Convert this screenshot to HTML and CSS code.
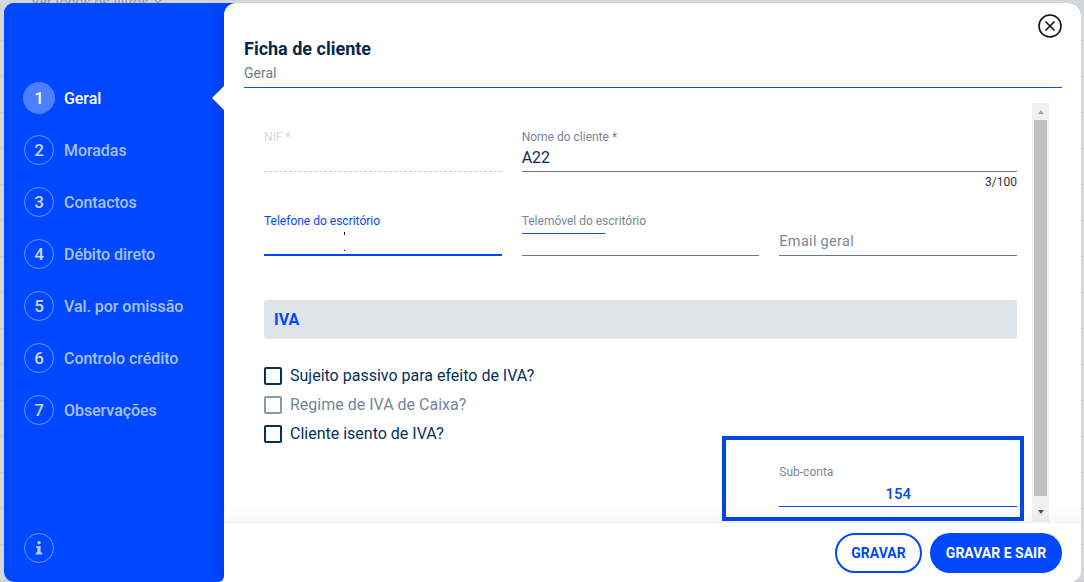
FILE: index.html
```html
<!DOCTYPE html>
<html lang="pt">
<head>
  <meta charset="UTF-8">
  <meta name="viewport" content="width=device-width, initial-scale=1.0">
  <title>Ficha de cliente</title>
  <link rel="stylesheet" href="styles.css">
</head>
<body>

  <!-- Page behind the dialog -->
  <div class="behind">
    Ver todos os filtros
    <svg width="12" height="12" viewBox="0 0 12 12"><path d="M1 3l5 5 5-5" fill="none" stroke="#8b97a8" stroke-width="1.2"/></svg>
  </div>

  <div class="modal">
    <aside class="sidebar">
      <ul class="steps">
        <li class="step active"><span class="num">1</span>Geral</li>
        <li class="step"><span class="num">2</span>Moradas</li>
        <li class="step"><span class="num">3</span>Contactos</li>
        <li class="step"><span class="num">4</span>Débito direto</li>
        <li class="step"><span class="num">5</span>Val. por omissão</li>
        <li class="step"><span class="num">6</span>Controlo crédito</li>
        <li class="step"><span class="num">7</span>Observações</li>
      </ul>
      <span class="num info">
        <svg width="14" height="20" viewBox="0 0 14 20"><circle cx="7" cy="3.5" r="2.2" fill="#b9ccff"/><path d="M3.5 7.5h5.5v8h2v2.5h-8v-2.5h2v-5.5h-1.500z" fill="#b9ccff"/></svg>
      </span>
    </aside>

    <main class="panel">
      <header class="panel-head">
        <h2>Ficha de cliente</h2>
        <p>Geral</p>
        <button class="close" aria-label="Fechar">
          <svg width="24" height="24" viewBox="0 0 24 24"><circle cx="12" cy="12" r="11" fill="none" stroke="#111" stroke-width="1.6"/><path d="M7.500 7.500l9 9M16.500 7.500l-9 9" stroke="#111" stroke-width="1.6"/></svg>
        </button>
      </header>

      <div class="content">
        <form class="form">
          <div class="grid row-one">
            <div class="field disabled">
              <label>NIF *</label>
              <div class="value"></div>
            </div>
            <div class="field wide">
              <label>Nome do cliente *</label>
              <div class="value">A22</div>
              <small class="counter">3/100</small>
            </div>
          </div>

          <div class="grid row-two">
            <div class="field focused">
              <label>Telefone do escritório</label>
              <div class="value"></div>
              <i class="tick tick-top"></i>
              <i class="tick tick-bottom"></i>
            </div>
            <div class="field">
              <label>Telemóvel do escritório</label>
              <div class="value"></div>
              <i class="notch"></i>
            </div>
            <div class="field">
              <div class="value placeholder">Email geral</div>
            </div>
          </div>

          <h3 class="band">IVA</h3>

          <ul class="checks">
            <li class="check"><span class="box"></span>Sujeito passivo para efeito de IVA?</li>
            <li class="check off"><span class="box"></span>Regime de IVA de Caixa?</li>
            <li class="check"><span class="box"></span>Cliente isento de IVA?</li>
          </ul>

          <div class="grid row-sub">
            <div class="field sub">
              <label>Sub-conta</label>
              <div class="value">154</div>
            </div>
          </div>
        </form>

        <div class="highlight"></div>

        <div class="scrollbar">
          <span class="arrow up"></span>
          <span class="thumb"></span>
          <span class="arrow down"></span>
        </div>
      </div>

      <footer class="panel-foot">
        <button class="btn outline">GRAVAR</button>
        <button class="btn solid">GRAVAR E SAIR</button>
      </footer>
    </main>
  </div>

</body>
</html>
```

FILE: styles.css
```css
* {
  box-sizing: border-box;
}
html, body {
  height: 100%;
}
body {
  margin: 0;
  padding: 3px 3px 0 4px;
  background: repeating-linear-gradient(to bottom, #d5d6da 0, #d5d6da 35px, #cbccd1 35px, #cbccd1 36px) 0 5px;
  font-family: Roboto, Arial, sans-serif;
  color: #06305a;
  overflow: hidden;
  position: relative;
}
.behind {
  position: absolute;
  top: -6px;
  left: 31px;
  font-size: 14px;
  color: #8b97a8;
}
.modal {
  position: relative;
  display: flex;
  height: 579px;
  border-radius: 10px 12px 12px 10px;
  overflow: hidden;
  background: linear-gradient(to bottom, #0048ff 50%, #fff 50%);
}

/* Left steps */
.sidebar {
  width: 220px;
  flex: none;
  display: flex;
  flex-direction: column;
  justify-content: space-between;
  padding: 79px 0 19px 19px;
  background: #0048ff;
  border-radius: 0 0 6px 0;
}
.steps {
  list-style: none;
  margin: 0;
  padding: 0;
}
.step {
  position: relative;
  display: flex;
  align-items: center;
  gap: 9px;
  height: 32px;
  margin-bottom: 20px;
  font-size: 16px;
  font-weight: 500;
  letter-spacing: -0.05px;
  color: #a9c0ff;
}
.num {
  width: 30px;
  height: 30px;
  margin: 0 1px;
  display: flex;
  align-items: center;
  justify-content: center;
  border: 1px solid #6e94ff;
  border-radius: 50%;
  font-size: 17px;
  font-weight: 500;
  color: #c9d8ff;
}
.step.active {
  color: #fff;
}
.step.active .num {
  width: 32px;
  height: 32px;
  margin: 0;
  border: none;
  background: #4d7eff;
  color: #fff;
}
.step.active::after {
  content: "";
  position: absolute;
  right: 0;
  top: 4px;
  border-style: solid;
  border-width: 12px 12px 12px 0;
  border-color: transparent #fff transparent transparent;
}
.info svg {
  transform: scale(0.8);
}

/* Right panel */
.panel {
  flex: 1;
  min-width: 0;
  display: flex;
  flex-direction: column;
  background: #fff;
  border-radius: 12px 0 0 0;
  box-shadow: 0 0 24px rgba(0, 20, 110, 0.25);
}
.panel-head {
  position: relative;
  height: 85px;
  margin: 0 19px 0 20px;
  padding-top: 36px;
  border-bottom: 1px solid #1a4fd0;
}
.panel-head h2 {
  margin: 0;
  font-size: 18px;
  font-weight: 700;
  line-height: 20px;
  color: #06284a;
}
.panel-head p {
  margin: 6px 0 0;
  font-size: 14px;
  line-height: 16px;
  color: #6d7a89;
}
.close {
  position: absolute;
  top: 11px;
  right: 0;
  padding: 0;
  border: none;
  background: none;
  line-height: 0;
}
.content {
  position: relative;
  flex: 1;
  min-height: 0;
  overflow: hidden;
}
.form {
  padding: 42px 64px 0 40px;
}
.grid {
  display: grid;
  grid-template-columns: repeat(3, 1fr);
  column-gap: 20px;
}

/* Fields */
.field {
  position: relative;
}
.field label {
  display: block;
  font-size: 12px;
  line-height: 14px;
  color: #7a8796;
}
.value {
  height: 28px;
  padding-top: 4px;
  font-size: 16px;
  line-height: 20px;
  border-bottom: 1px solid #6e7885;
}
.wide {
  grid-column: span 2;
}
.counter {
  display: block;
  margin-top: 4px;
  text-align: right;
  font-size: 12px;
  line-height: 13px;
  color: #333;
}
.disabled label {
  color: #d3d8df;
}
.disabled .value {
  border-bottom: 1px dashed #c9ced5;
}
.row-two {
  margin-top: 25px;
}
.focused label {
  color: #0048ff;
}
.focused .value {
  border-bottom: 2px solid #0048ff;
}
.tick {
  position: absolute;
  left: 80px;
  width: 1px;
  background: #111;
}
.tick-top {
  top: 18px;
  height: 3px;
}
.tick-bottom {
  top: 36px;
  height: 1px;
}
.notch {
  position: absolute;
  left: 0;
  top: 19px;
  width: 83px;
  height: 1px;
  background: #1a4fd0;
}
.value.placeholder {
  height: 42px;
  padding-top: 18px;
  font-size: 14.5px;
  letter-spacing: 0.3px;
  color: #7a8796;
}

/* IVA section */
.band {
  margin: 44px 0 0;
  height: 39px;
  padding-left: 10px;
  background: #dfe3ea;
  border-radius: 3px;
  font-size: 16px;
  font-weight: 700;
  line-height: 40px;
  color: #0048ff;
}
.checks {
  list-style: none;
  margin: 22px 0 0;
  padding: 0;
}
.check {
  display: flex;
  align-items: center;
  gap: 8px;
  height: 29px;
  font-size: 16px;
}
.box {
  width: 18px;
  height: 18px;
  border: 2px solid #06305a;
  border-radius: 2px;
}
.check.off {
  color: #74859a;
}
.check.off .box {
  border-color: #8a99aa;
}
.row-sub {
  margin-top: 17px;
}
.sub {
  grid-column: 3;
}
.sub .value {
  height: 28px;
  padding-top: 5px;
  text-align: center;
  font-size: 15px;
  font-weight: 500;
  color: #0048ff;
  border-bottom-color: #0048ff;
}

/* Box drawn over the sub-account field */
.highlight {
  position: absolute;
  left: 498px;
  top: 348px;
  width: 302px;
  height: 85px;
  border: 4px solid #0048e6;
}

/* Scrollbar */
.scrollbar {
  position: absolute;
  top: 15px;
  right: 32px;
  bottom: 0;
  width: 17px;
  display: flex;
  flex-direction: column;
  align-items: center;
  background: #f1f1f1;
}
.thumb {
  flex: 1;
  width: 13px;
  background: #c1c1c1;
}
.arrow {
  width: 17px;
  height: 17px;
  display: flex;
  align-items: center;
  justify-content: center;
}
.arrow.down {
  height: 26px;
  padding-top: 5px;
}
.arrow::before {
  content: "";
  border-style: solid;
  border-color: transparent;
  border-width: 0 3.500px;
}
.up::before {
  border-bottom: 4px solid #a3a3a3;
}
.down::before {
  border-top: 4px solid #505050;
}

/* Footer */
.panel-foot {
  position: relative;
  height: 60px;
  flex: none;
  display: flex;
  justify-content: flex-end;
  align-items: center;
  gap: 8px;
  padding-right: 19px;
  background: #fff;
  box-shadow: 0 -6px 14px rgba(0, 0, 0, 0.04);
  border-top: 1px solid #f0f0f0;
}
.btn {
  height: 40px;
  border-radius: 20px;
  font-family: inherit;
  font-size: 14px;
  font-weight: 700;
  cursor: pointer;
}
.outline {
  width: 87px;
  background: #fff;
  border: 2px solid #0048ff;
  color: #0048ff;
}
.solid {
  width: 132px;
  background: #0048ff;
  border: none;
  color: #fff;
}
```
